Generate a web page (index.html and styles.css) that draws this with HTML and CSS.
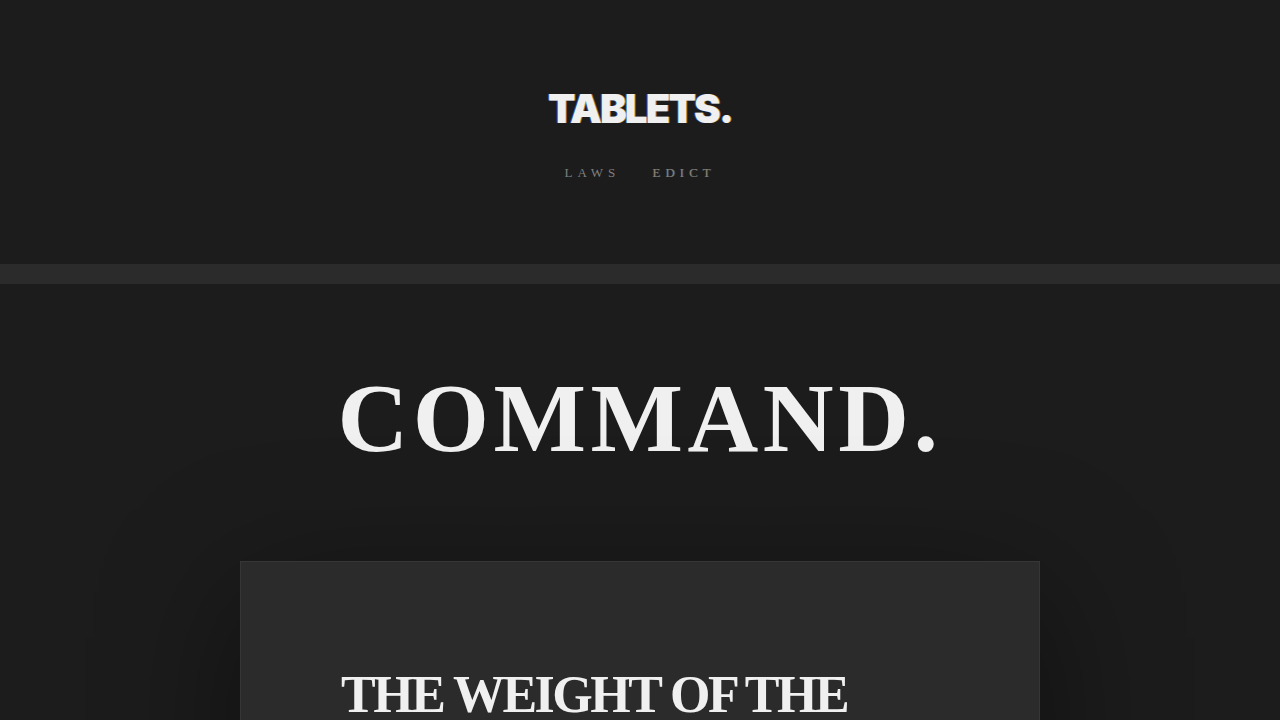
FILE: index.html
```html
<!DOCTYPE html>
<html lang="en">
<head>
<meta charset="utf-8">
<title>TABLETS.</title>
<link rel="stylesheet" href="styles.css">
</head>
<body>
<header class="site-header">
  <div class="logo">TABLETS.</div>
  <nav class="nav">
    <a class="nav-link laws" href="#">LAWS</a>
    <a class="nav-link edict" href="#">EDICT</a>
  </nav>
</header>
<div class="stripe"></div>
<main class="hero">
  <h1 class="hero-title">COMMAND.</h1>
  <section class="card">
    <h2 class="card-title">THE WEIGHT OF THE</h2>
  </section>
</main>
</body>
</html>
```
FILE: styles.css
```css
html, body {
  margin: 0;
  padding: 0;
  background: #1c1c1c;
  overflow: hidden;
}
body {
  font-family: "Liberation Serif", serif;
  color: #f0f0f0;
}
.site-header {
  height: 264px;
  box-sizing: border-box;
  padding-top: 85px;
  display: flex;
  flex-direction: column;
  align-items: center;
}
.logo {
  font-family: Inter, "Liberation Sans", sans-serif;
  font-weight: 900;
  font-size: 40px;
  line-height: 48px;
  letter-spacing: -1.8px;
  color: #f0f0f0;
  text-shadow: -1px 0 rgba(60, 110, 220, 0.6), 1px 0 rgba(220, 170, 60, 0.6);
}
.nav {
  margin-top: 32px;
  display: flex;
  gap: 32px;
}
.nav-link {
  font-family: "Liberation Serif", serif;
  font-size: 13px;
  line-height: 16px;
  letter-spacing: 5px;
  text-decoration: none;
}
.laws {
  color: #7e8080;
}
.edict {
  color: #8a8272;
  text-shadow: 1px 0 rgba(70, 110, 170, 0.5);
}
.stripe {
  height: 20px;
  background: #2b2b2b;
}
.hero {
  display: flex;
  flex-direction: column;
  align-items: center;
}
.hero-title {
  margin: 85px 0 0;
  font-family: "Liberation Serif", serif;
  font-weight: 700;
  font-size: 98px;
  line-height: 1;
  letter-spacing: 4.5px;
  color: #f0f0f0;
}
.card {
  margin-top: 94px;
  width: 800px;
  min-height: 400px;
  box-sizing: border-box;
  padding: 107px 100px 0;
  background: #2b2b2b;
  border: 1px solid #363636;
  box-shadow: 0 30px 140px rgba(0, 0, 0, 0.45);
}
.card-title {
  margin: 0;
  font-family: "Liberation Serif", serif;
  font-weight: 700;
  font-size: 52px;
  line-height: 1;
  letter-spacing: -2.5px;
  color: #f0f0f0;
}
```
